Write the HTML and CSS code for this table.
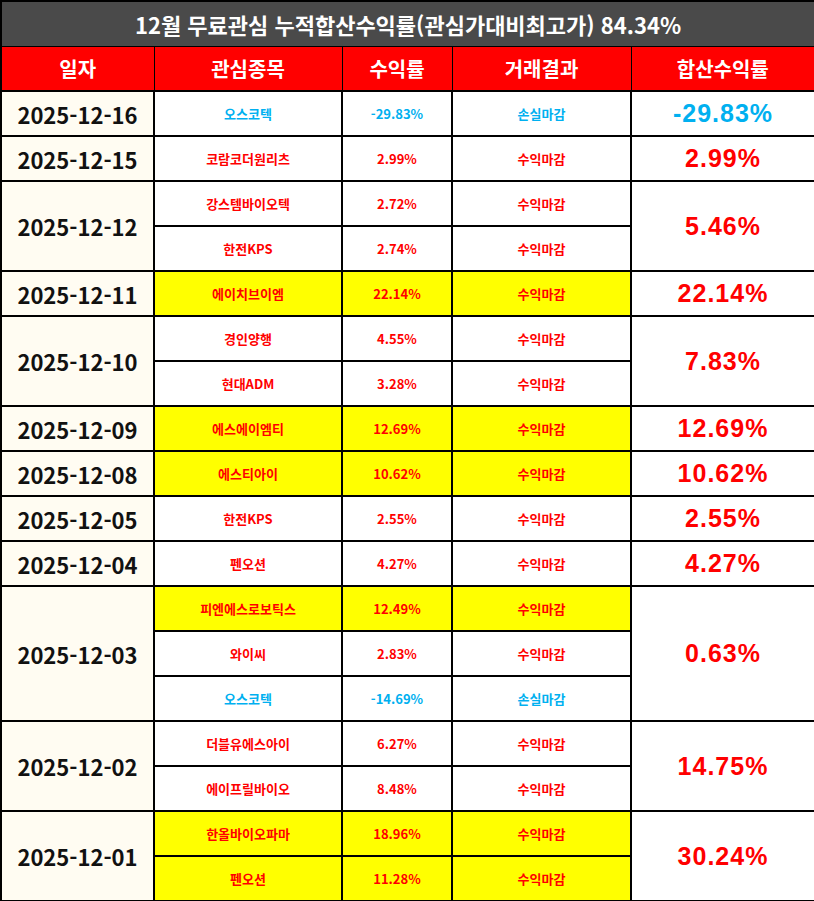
FILE: index.html
```html
<!DOCTYPE html>
<html lang="ko">
<head>
<meta charset="utf-8">
<link rel="stylesheet" href="styles.css">
</head>
<body>
<table class="board">
  <colgroup>
    <col class="c-date"><col class="c-name"><col class="c-rate"><col class="c-result"><col class="c-total">
  </colgroup>
  <tr class="title-row"><td colspan="5">12월 무료관심 누적합산수익률(관심가대비최고가) 84.34%</td></tr>
  <tr class="head-row"><th>일자</th><th>관심종목</th><th>수익률</th><th>거래결과</th><th>합산수익률</th></tr>

  <tr><td class="date">2025-12-16</td><td class="cell loss">오스코텍</td><td class="cell loss">-29.83%</td><td class="cell loss">손실마감</td><td class="total loss">-29.83%</td></tr>
  <tr><td class="date">2025-12-15</td><td class="cell">코람코더원리츠</td><td class="cell">2.99%</td><td class="cell">수익마감</td><td class="total">2.99%</td></tr>
  <tr><td class="date" rowspan="2">2025-12-12</td><td class="cell">강스템바이오텍</td><td class="cell">2.72%</td><td class="cell">수익마감</td><td class="total" rowspan="2">5.46%</td></tr>
  <tr><td class="cell">한전KPS</td><td class="cell">2.74%</td><td class="cell">수익마감</td></tr>
  <tr><td class="date">2025-12-11</td><td class="cell hl">에이치브이엠</td><td class="cell hl">22.14%</td><td class="cell hl">수익마감</td><td class="total">22.14%</td></tr>
  <tr><td class="date" rowspan="2">2025-12-10</td><td class="cell">경인양행</td><td class="cell">4.55%</td><td class="cell">수익마감</td><td class="total" rowspan="2">7.83%</td></tr>
  <tr><td class="cell">현대ADM</td><td class="cell">3.28%</td><td class="cell">수익마감</td></tr>
  <tr><td class="date">2025-12-09</td><td class="cell hl">에스에이엠티</td><td class="cell hl">12.69%</td><td class="cell hl">수익마감</td><td class="total">12.69%</td></tr>
  <tr><td class="date">2025-12-08</td><td class="cell hl">에스티아이</td><td class="cell hl">10.62%</td><td class="cell hl">수익마감</td><td class="total">10.62%</td></tr>
  <tr><td class="date">2025-12-05</td><td class="cell">한전KPS</td><td class="cell">2.55%</td><td class="cell">수익마감</td><td class="total">2.55%</td></tr>
  <tr><td class="date">2025-12-04</td><td class="cell">펜오션</td><td class="cell">4.27%</td><td class="cell">수익마감</td><td class="total">4.27%</td></tr>
  <tr><td class="date" rowspan="3">2025-12-03</td><td class="cell hl">피엔에스로보틱스</td><td class="cell hl">12.49%</td><td class="cell hl">수익마감</td><td class="total" rowspan="3">0.63%</td></tr>
  <tr><td class="cell">와이씨</td><td class="cell">2.83%</td><td class="cell">수익마감</td></tr>
  <tr><td class="cell loss">오스코텍</td><td class="cell loss">-14.69%</td><td class="cell loss">손실마감</td></tr>
  <tr><td class="date" rowspan="2">2025-12-02</td><td class="cell">더블유에스아이</td><td class="cell">6.27%</td><td class="cell">수익마감</td><td class="total" rowspan="2">14.75%</td></tr>
  <tr><td class="cell">에이프릴바이오</td><td class="cell">8.48%</td><td class="cell">수익마감</td></tr>
  <tr><td class="date" rowspan="2">2025-12-01</td><td class="cell hl">한올바이오파마</td><td class="cell hl">18.96%</td><td class="cell hl">수익마감</td><td class="total" rowspan="2">30.24%</td></tr>
  <tr><td class="cell hl">펜오션</td><td class="cell hl">11.28%</td><td class="cell hl">수익마감</td></tr>
</table>
</body>
</html>
```
FILE: styles.css
```css
html, body {
  margin: 0;
  padding: 0;
  background: #ffffff;
}
.board {
  width: 814px;
  table-layout: fixed;
  border-collapse: collapse;
  border: 2px solid #000;
  font-family: "Noto Sans CJK KR", "Noto Sans", sans-serif;
}
.c-date { width: 153px; }
.c-name { width: 188px; }
.c-rate { width: 110px; }
.c-result { width: 179px; }
.c-total { width: 184px; }
.board td, .board th {
  padding: 0;
  text-align: center;
  vertical-align: middle;
  border: 2px solid #000;
}
.board tr { height: 45px; }
.title-row td {
  background: #4a4a4a;
  color: #fff;
  font-size: 22px;
  font-weight: 700;
  border-bottom: 1px solid #000;
  height: 43px;
}
.head-row th {
  background: #ff0000;
  color: #fff;
  font-size: 20px;
  font-weight: 700;
  border-top: 1px solid #000;
  border-left: 1px solid #000;
  border-right: 1px solid #000;
}
.date {
  background: #fffcf2;
  color: #111;
  font-size: 22px;
  font-weight: 700;
}
.cell {
  background: #fff;
  color: #ff0000;
  font-size: 13px;
  font-weight: 700;
}
.cell.hl { background: #ffff00; }
.total {
  background: #fff;
  color: #ff0000;
  font-family: "Liberation Sans", Arial, sans-serif;
  font-size: 25px;
  font-weight: 700;
  letter-spacing: 1px;
}
.loss { color: #00b0f0; }
```
